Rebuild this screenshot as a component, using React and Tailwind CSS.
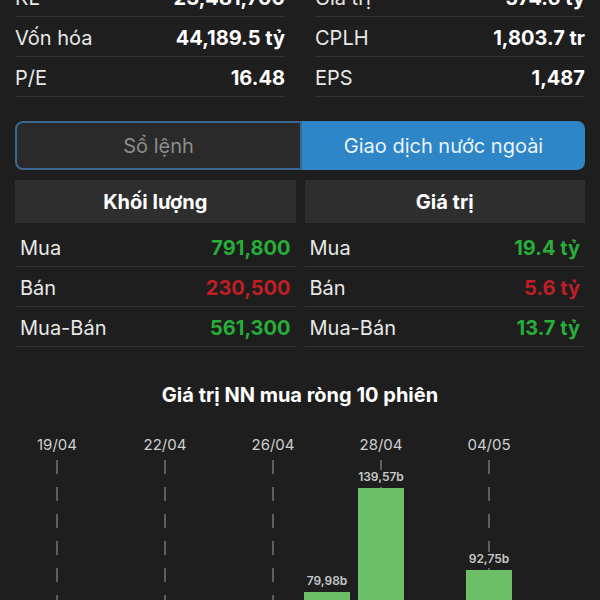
import React from 'react';

const info = [
    [
        ['KL', '23,481,700'],
        ['Vốn hóa', '44,189.5 tỷ'],
        ['P/E', '16.48'],
    ],
    [
        ['Giá trị', '574.6 tỷ'],
        ['CPLH', '1,803.7 tr'],
        ['EPS', '1,487'],
    ],
];

const tables = [
    {
        title: 'Khối lượng',
        rows: [
            ['Mua', '791,800', 'up'],
            ['Bán', '230,500', 'down'],
            ['Mua-Bán', '561,300', 'up'],
        ],
    },
    {
        title: 'Giá trị',
        rows: [
            ['Mua', '19.4 tỷ', 'up'],
            ['Bán', '5.6 tỷ', 'down'],
            ['Mua-Bán', '13.7 tỷ', 'up'],
        ],
    },
];

// 10 phiên, chỉ phiên chẵn có nhãn ngày
const sessions = [
    { date: '19/04', value: 25.3 },
    { date: null, value: -12.4 },
    { date: '22/04', value: 18.6 },
    { date: null, value: 40.1 },
    { date: '26/04', value: 9.7 },
    { date: null, value: 79.98 },
    { date: '28/04', value: 139.57 },
    { date: null, value: 31.2 },
    { date: '04/05', value: 92.75 },
    { date: null, value: 14.05 },
];

const SCALE = 1.751;

function DashedLine() {
    return (
        <svg className="absolute top-0 left-1/2 -translate-x-1/2" width="4" height="280">
            <line x1="2" y1="0" x2="2" y2="280" stroke="#5f5f5f" strokeWidth="2" strokeDasharray="14 13" />
        </svg>
    );
}

export default function App() {
    return (
        <div className="min-h-screen bg-[#1e1e1e] text-[#e8e8e8] overflow-hidden" style={{ fontFamily: 'Inter, "Noto Sans", sans-serif' }}>
            <div className="px-[15px]">
                {/* Thông tin cơ bản */}
                <div className="grid grid-cols-2 gap-x-[30px] mt-[-23px]">
                    {info.map((col, i) => (
                        <div key={i}>
                            {col.map(([label, value]) => (
                                <div key={label} className="h-[40px] pt-[3px] flex items-center justify-between border-b border-[#333333]">
                                    <span className="text-[20px]">{label}</span>
                                    <span className="text-[20px] font-bold text-white">{value}</span>
                                </div>
                            ))}
                        </div>
                    ))}
                </div>

                {/* Tabs */}
                <div className="mt-[24px] flex h-[49px]">
                    <div className="flex-1 flex items-center justify-center rounded-l-[8px] border-2 border-[#3b6790] bg-[#2a2a2a] text-[20px] text-[#8c8c8c]">
                        Sổ lệnh
                    </div>
                    <div className="flex-1 flex items-center justify-center rounded-r-[8px] bg-[#2e86c6] text-[20px] text-[#eaf4fb]">
                        Giao dịch nước ngoài
                    </div>
                </div>

                {/* Bảng khối lượng / giá trị */}
                <div className="mt-[10px] grid grid-cols-2 gap-x-[9px]">
                    {tables.map((t) => (
                        <div key={t.title}>
                            <div className="h-[43px] bg-[#2e2e2e] flex items-center justify-center text-[20px] font-bold text-white">
                                {t.title}
                            </div>
                            <div className="mt-[4px]">
                                {t.rows.map(([label, value, dir]) => (
                                    <div key={label} className="h-[40px] pt-[3px] px-[5px] flex items-center justify-between border-b border-[#333333]">
                                        <span className="text-[20px]">{label}</span>
                                        <span className={`text-[20px] font-bold ${dir === 'up' ? 'text-[#27ad38]' : 'text-[#bf1e26]'}`}>{value}</span>
                                    </div>
                                ))}
                            </div>
                        </div>
                    ))}
                </div>

                {/* Biểu đồ */}
                <div className="mt-[36px] text-center text-[20px] font-bold text-white leading-[24px]">
                    Giá trị NN mua ròng 10 phiên
                </div>
            </div>

            <div className="mt-[28px] px-[30px] grid grid-cols-10">
                {sessions.map((s, i) => (
                    <div key={i} className="flex flex-col items-center">
                        <div className="h-[20px] leading-[20px] text-[15px] text-[#cfcfcf]">{s.date}</div>
                        <div className="relative mt-[5px] h-[272px] w-full flex flex-col items-center justify-end">
                            {s.date && <DashedLine />}
                            {s.value > 0 && (
                                <>
                                    <div className="relative z-10 px-[2px] bg-[#1e1e1e] text-[12px] font-semibold text-[#c8c8c8] leading-[14px] mb-[4px]">
                                        {s.value.toFixed(2).replace('.', ',')}b
                                    </div>
                                    <div className="relative z-10 w-[46px] bg-[#6dbf67]" style={{ height: s.value * SCALE }} />
                                </>
                            )}
                        </div>
                    </div>
                ))}
            </div>
        </div>
    );
}
